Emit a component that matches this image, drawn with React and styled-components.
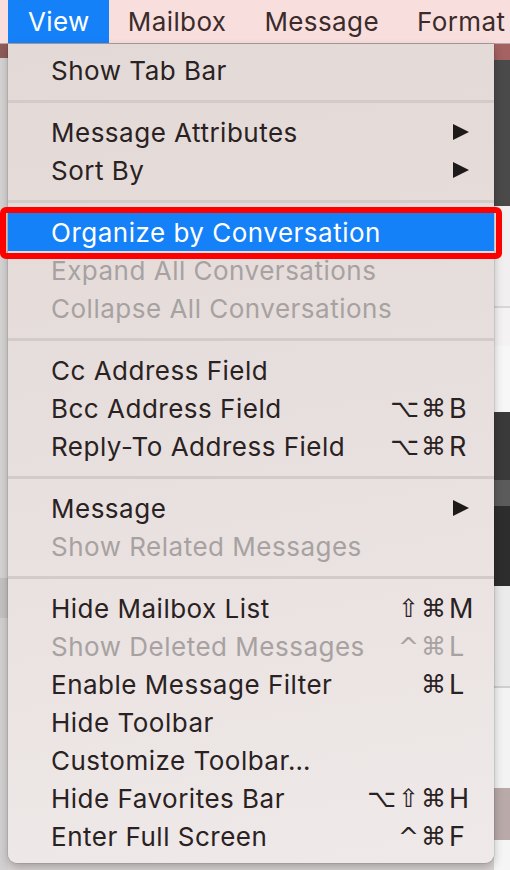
import React from 'react'
import styled, { createGlobalStyle, css } from 'styled-components'

const GlobalStyle = createGlobalStyle`
  html, body {
    margin: 0;
    padding: 0;
    background: #d9d4d3;
  }
  body {
    font-family: Inter, "Noto Sans", "DejaVu Sans", sans-serif;
    -webkit-font-smoothing: antialiased;
  }
`

/* Styled */
const Screen = styled.div`
  width: 510px;
  height: 870px;
  overflow: hidden;
  display: grid;
  grid-template-rows: 44px 1fr;
`

const MenuBar = styled.div`
  display: flex;
  align-items: stretch;
  padding-left: 8px;
  background: #f8dfde;
  border-bottom: 1px solid #b9aaa9;
  box-sizing: border-box;
`

const BarItem = styled.div`
  display: flex;
  align-items: center;
  padding: 0 19px;
  font-size: 26px;
  letter-spacing: 0.4px;
  white-space: nowrap;
  color: ${p => (p.$open ? '#fff' : '#3b2b2b')};
  background: ${p => (p.$open ? '#1581f9' : 'transparent')};
  &:first-child {
    padding-left: 20px;
  }
`

const Desk = styled.div`
  display: grid;
  grid-template-columns: 8px 486px 16px;
  min-height: 0;
`

const Strip = styled.div`
  display: flex;
  flex-direction: column;
`

const Patch = styled.div`
  height: ${p => p.$h}px;
  flex: ${p => (p.$h ? 'none' : 1)};
  background: ${p => p.$bg};
  border-bottom: ${p => (p.$line ? `2px solid ${p.$line}` : 'none')};
`

const Menu = styled.div`
  position: relative;
  align-self: start;
  padding: 7px 0 8px;
  background: linear-gradient(170deg, #e3d9d7 0%, #e7dfdd 45%, #efe9e9 100%);
  border-radius: 0 0 9px 9px;
  box-shadow: 0 4px 10px rgba(0, 0, 0, 0.25), 0 0 0 1px rgba(0, 0, 0, 0.08);
`

const Row = styled.div`
  position: relative;
  display: flex;
  align-items: center;
  height: 38px;
  padding: 0 12px 0 43px;
  font-size: 26px;
  letter-spacing: 0.5px;
  white-space: nowrap;
  color: ${p => (p.$disabled ? '#a7a2a1' : '#2a2222')};

  ${p => p.$active && css`
    color: #fff;
    background: #1581f9;
    &::after {
      content: '';
      position: absolute;
      top: -6px;
      bottom: -8px;
      left: -8px;
      right: -8px;
      border: 6px solid #fe0000;
      border-radius: 6px;
    }
  `}
`

const Label = styled.span`
  flex: 1;
`

const Shortcut = styled.span`
  display: flex;
  align-items: center;
`

const Mods = styled.span`
  font-family: "DejaVu Sans", sans-serif;
  font-size: 25px;
  letter-spacing: 2px;
`

const Key = styled.span`
  width: 33px;
  padding-left: 1px;
  font-size: 27px;
`

const Separator = styled.div`
  height: 24px;
  display: flex;
  align-items: center;
  &::before {
    content: '';
    flex: 1;
    height: 3px;
    background: #d3cbc9;
  }
`

const Arrow = () => (
  <svg width="18" height="18" viewBox="0 0 18 18" style={{ marginRight: 12 }}>
    <path d="M1 1 L17 9 L1 17 Z" fill="#1f1a1a" />
  </svg>
)

const menu = [
  [{ label: 'Show Tab Bar' }],
  [
    { label: 'Message Attributes', submenu: true },
    { label: 'Sort By', submenu: true },
  ],
  [
    { label: 'Organize by Conversation', active: true },
    { label: 'Expand All Conversations', disabled: true },
    { label: 'Collapse All Conversations', disabled: true },
  ],
  [
    { label: 'Cc Address Field' },
    { label: 'Bcc Address Field', mods: '⌥⌘', key: 'B' },
    { label: 'Reply-To Address Field', mods: '⌥⌘', key: 'R' },
  ],
  [
    { label: 'Message', submenu: true },
    { label: 'Show Related Messages', disabled: true },
  ],
  [
    { label: 'Hide Mailbox List', mods: '⇧⌘', key: 'M' },
    { label: 'Show Deleted Messages', mods: '^⌘', key: 'L', disabled: true },
    { label: 'Enable Message Filter', mods: '⌘', key: 'L' },
    { label: 'Hide Toolbar' },
    { label: 'Customize Toolbar…' },
    { label: 'Hide Favorites Bar', mods: '⌥⇧⌘', key: 'H' },
    { label: 'Enter Full Screen', mods: '^⌘', key: 'F' },
  ],
]

const App = () => {
  return (
    <Screen>
      <GlobalStyle />
      <MenuBar>
        <BarItem $open>View</BarItem>
        <BarItem>Mailbox</BarItem>
        <BarItem>Message</BarItem>
        <BarItem>Format</BarItem>
      </MenuBar>
      <Desk>
        {/* window edge peeking out on the left */}
        <Strip>
          <Patch $h={14} $bg="#8e5b5a" />
          <Patch $h={520} $bg="#d6d3d3" />
          <Patch $h={40} $bg="#c4c2c2" />
          <Patch $bg="#d2d0d0" />
        </Strip>

        <Menu>
          {menu.map((group, gi) => (
            <React.Fragment key={gi}>
              {gi > 0 && <Separator />}
              {group.map(item => (
                <Row key={item.label} $active={item.active} $disabled={item.disabled}>
                  <Label>{item.label}</Label>
                  {item.submenu && <Arrow />}
                  {item.key && (
                    <Shortcut>
                      <Mods>{item.mods}</Mods>
                      <Key>{item.key}</Key>
                    </Shortcut>
                  )}
                </Row>
              ))}
            </React.Fragment>
          ))}
        </Menu>

        {/* mail window content on the right */}
        <Strip>
          <Patch $h={16} $bg="#a46262" />
          <Patch $h={146} $bg="#4b4a4a" />
          <Patch $h={100} $bg="#f1efef" $line="#d8d6d6" />
          <Patch $h={38} $bg="#f4f2f2" />
          <Patch $h={66} $bg="#f7f7f7" />
          <Patch $h={68} $bg="#3a3a3a" />
          <Patch $h={26} $bg="#5b5b5b" />
          <Patch $h={80} $bg="#2d2d2d" />
          <Patch $h={100} $bg="#ebebeb" $line="#cfcfcf" />
          <Patch $h={100} $bg="#f3f3f3" />
          <Patch $h={52} $bg="#b9a9a9" />
          <Patch $bg="#f5f5f5" />
        </Strip>
      </Desk>
    </Screen>
  )
}

export default App
